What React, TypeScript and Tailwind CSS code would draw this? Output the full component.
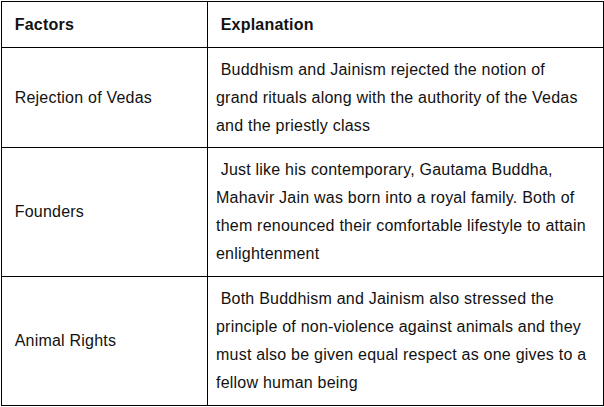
const rows = [
  {
    factor: 'Rejection of Vedas',
    text: 'Buddhism and Jainism rejected the notion of grand rituals along with the authority of the Vedas and the priestly class',
    h: 'h-[100px]',
  },
  {
    factor: 'Founders',
    text: 'Just like his contemporary, Gautama Buddha, Mahavir Jain was born into a royal family. Both of them renounced their comfortable lifestyle to attain enlightenment',
    h: 'h-[129px]',
  },
  {
    factor: 'Animal Rights',
    text: 'Both Buddhism and Jainism also stressed the principle of non-violence against animals and they must also be given equal respect as one gives to a fellow human being',
    h: 'h-[129px]',
  },
]

export default function App() {
  return (
    <div className="min-h-[407px] bg-white pl-px pt-px font-['Liberation_Sans',Arial,sans-serif] text-[16px] tracking-[0.22px] text-[#111]">
      <table className="w-[603px] table-fixed border-collapse border border-black">
        <colgroup>
          <col className="w-[206px]" />
          <col />
        </colgroup>
        <thead>
          <tr className="h-[46px]">
            <th className="border border-black px-2 text-left align-middle font-bold leading-7">&nbsp;Factors</th>
            <th className="border border-black px-2 text-left align-middle font-bold leading-7">&nbsp;Explanation</th>
          </tr>
        </thead>
        <tbody>
          {rows.map((r) => (
            <tr key={r.factor} className={r.h}>
              <td className="border border-black px-2 py-0 align-middle leading-7">&nbsp;{r.factor}</td>
              <td className="border border-black py-0 pl-2 pr-[14px] align-middle leading-7">&nbsp;{r.text}</td>
            </tr>
          ))}
        </tbody>
      </table>
    </div>
  )
}
